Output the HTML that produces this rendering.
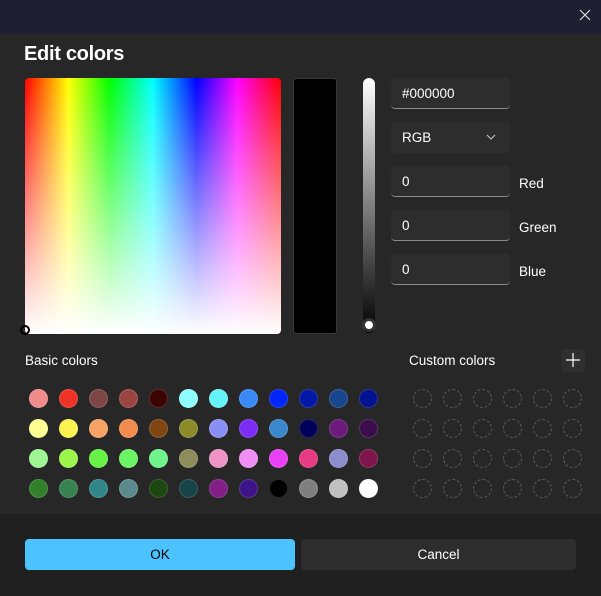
<!DOCTYPE html><html><head><style>
body{margin:0;width:601px;height:596px;background:#202020;font-family:"Liberation Sans",sans-serif;position:relative;overflow:hidden;color:#fff}
.a{position:absolute}
.tb{left:0;top:0;width:601px;height:34px;background:#1e1f32}
.body{left:0;top:34px;width:601px;height:480px;background:#272727}
.ft{left:0;top:514px;width:601px;height:82px;background:#202020}
.inp{position:absolute;left:391px;width:119px;height:31px;background:#2d2d2d;border-radius:4px;border-bottom:1px solid #8a8a8a;box-sizing:border-box;font-size:13.5px;line-height:32px;padding-left:11px}
.lbl{position:absolute;left:519px;font-size:13.5px}
.c{position:absolute;width:19px;height:19px;border-radius:50%;box-sizing:border-box;border:1px solid rgba(255,255,255,.15)}
.d{position:absolute;width:19px;height:19px;border-radius:50%;box-sizing:border-box;border:1px dashed #5a5a5a}
</style></head><body>
<div class="a tb"></div>
<div class="a body"></div>
<div class="a ft"></div>
<svg class="a" style="left:579px;top:9px" width="12" height="12"><path d="M1 1L11 11M11 1L1 11" stroke="#ddd" stroke-width="1.2"/></svg>
<div class="a" style="left:24px;top:43px;font-size:20px;font-weight:bold;letter-spacing:-0.3px">Edit colors</div>
<div class="a" style="left:25px;top:78px;width:256px;height:256px;border-radius:4px;background:linear-gradient(to right,#f00,#ff0 17%,#0f0 33%,#0ff 50%,#00f 67%,#f0f 83%,#f00)"></div>
<div class="a" style="left:25px;top:78px;width:256px;height:256px;border-radius:4px;background:linear-gradient(to bottom,rgba(255,255,255,0),#fff)"></div>
<div class="a" style="left:20px;top:325px;width:10px;height:10px;border-radius:50%;border:2px solid #000;box-sizing:border-box"></div>
<div class="a" style="left:293px;top:78px;width:44px;height:256px;background:#000;border:1px solid #3a3a3a;box-sizing:border-box;border-radius:3px"></div>
<div class="a" style="left:363px;top:78px;width:12px;height:255px;border-radius:6px;background:linear-gradient(#fff,#000)"></div>
<div class="a" style="left:362px;top:318px;width:14px;height:14px;border-radius:50%;background:#fff;border:3px solid #333;box-sizing:border-box"></div>
<div class="inp" style="top:78px">#000000</div>
<div class="inp" style="top:122px;border-bottom:none">RGB<svg style="position:absolute;left:95px;top:12px" width="10" height="6"><path d="M1 1L5 5L9 1" stroke="#ccc" fill="none"/></svg></div>
<div class="inp" style="top:166px">0</div><div class="lbl" style="top:176px">Red</div>
<div class="inp" style="top:210px">0</div><div class="lbl" style="top:220px">Green</div>
<div class="inp" style="top:254px">0</div><div class="lbl" style="top:264px">Blue</div>
<div class="a" style="left:25px;top:353px;font-size:13.5px">Basic colors</div>
<div class="a" style="left:409px;top:353px;font-size:13.5px">Custom colors</div>
<div class="a" style="left:561px;top:349px;width:24px;height:23px;background:#2f2f2f;border-radius:4px"></div>
<svg class="a" style="left:566px;top:353px" width="14" height="14"><path d="M7 0V14M0 7H14" stroke="#fff" stroke-width="1.2"/></svg>
<div id="g"></div>
<script>
var cols=[["#f28b8b","#ef3226","#7f4646","#9b4541","#3d0404","#8ffefe","#64f3f8","#3a88f5","#0026fa","#0319a6","#18468f","#03138f"],["#fefe91","#fcf350","#f5a262","#f38b4e","#7f4612","#8d8a2a","#8a8ff5","#7b2df5","#3a87cc","#000058","#6c1a7b","#3c0d4c"],["#9ef692","#9bf54a","#67f144","#6bf564","#6ff48c","#8c8c5c","#ef92c5","#f08ef5","#e93ff5","#e73a83","#8c8dcc","#80154b"],["#32802a","#368350","#31868a","#5a8a8d","#1c4710","#164447","#821e85","#3c1488","#000000","#7f7f7f","#c0c0c0","#ffffff"]];
var ys=[398,428,458,488],h="";
for(var r=0;r<4;r++){for(var i=0;i<12;i++)h+='<div class="c" style="left:'+(28.5+i*30)+'px;top:'+(ys[r]-9.5)+'px;background:'+cols[r][i]+'"></div>';
for(var j=0;j<6;j++)h+='<div class="d" style="left:'+(412.5+j*30)+'px;top:'+(ys[r]-9.5)+'px"></div>';}
document.getElementById("g").innerHTML=h;
</script>
<div class="a" style="left:25px;top:539px;width:270px;height:31px;background:#4cc2ff;border-radius:4px;color:#000;font-size:13.5px;text-align:center;line-height:32px">OK</div>
<div class="a" style="left:301px;top:539px;width:275px;height:31px;background:#2d2d2d;border-radius:4px;font-size:13.5px;text-align:center;line-height:32px">Cancel</div>
</body></html>
